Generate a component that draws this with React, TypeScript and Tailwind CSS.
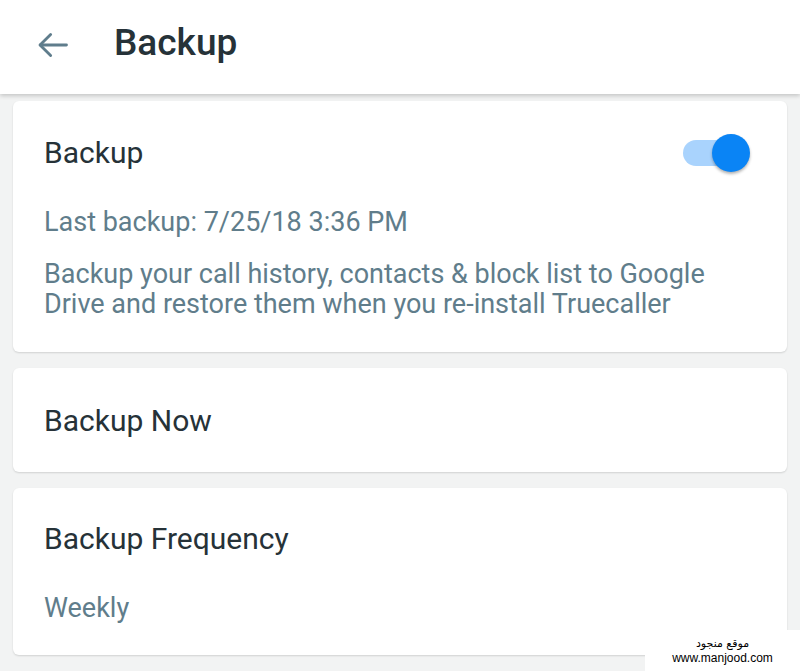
import React, { useState } from 'react';

const font = { fontFamily: 'Roboto, "Noto Sans", sans-serif' };

function Toggle({ on, onChange }: { on: boolean; onChange: () => void }) {
  return (
    <button onClick={onChange} className="relative w-[70px] h-[40px] flex items-center">
      <span className={`block w-[60px] h-[26px] rounded-full ml-[2px] ${on ? 'bg-[#a9d3fd]' : 'bg-[#c9ced1]'}`} />
      <span
        className={`absolute top-[1px] w-[38px] h-[38px] rounded-full shadow-[0_2px_3px_rgba(0,0,0,0.3)] ${
          on ? 'left-[31px] bg-[#0a84f5]' : 'left-0 bg-[#f5f5f5]'
        }`}
      />
    </button>
  );
}

export default function App() {
  const [enabled, setEnabled] = useState(true);

  return (
    <div className="relative w-[800px] h-[671px] overflow-hidden bg-[#f2f3f3]" style={font}>
      {/* Toolbar */}
      <div className="h-[94px] bg-white flex items-center shadow-[0_2px_4px_rgba(0,0,0,0.18)] relative z-10">
        <button className="ml-[34px] w-[38px] h-[38px] -mt-[4px] flex items-center justify-center text-[#5f7d8c]">
          <svg width="38" height="38" viewBox="0 0 24 24" fill="none" stroke="currentColor" strokeWidth="1.8" strokeLinecap="round" strokeLinejoin="round">
            <path d="M20.5 12H4" />
            <path d="M10.5 5.3L3.8 12l6.7 6.7" />
          </svg>
        </button>
        <h1 className="ml-[42px] text-[37px] leading-[40px] font-medium text-[#263238] -mt-[8px]">Backup</h1>
      </div>

      <div className="px-[13px] pt-[7px] flex flex-col gap-[16px]">
        {/* Backup card */}
        <div className="bg-white rounded-[6px] shadow-[0_1px_2px_rgba(0,0,0,0.14)] pl-[31px] pr-[36px] pt-[34px] pb-[33px]">
          <div className="flex items-center justify-between h-[36px]">
            <span className="text-[30px] leading-[36px] text-[#263238]">Backup</span>
            <Toggle on={enabled} onChange={() => setEnabled(!enabled)} />
          </div>
          <p className="mt-[36px] text-[27px] leading-[30px] text-[#607d8b]">Last backup: 7/25/18 3:36 PM</p>
          <p className="mt-[22px] text-[27px] leading-[30px] text-[#607d8b]">
            Backup your call history, contacts &amp; block list to Google
            <br />
            Drive and restore them when you re-install Truecaller
          </p>
        </div>

        {/* Backup now */}
        <div className="bg-white rounded-[6px] shadow-[0_1px_2px_rgba(0,0,0,0.14)] h-[104px] pl-[31px] flex items-center">
          <span className="text-[30px] leading-[36px] text-[#263238] pt-[2px]">Backup Now</span>
        </div>

        {/* Frequency */}
        <div className="bg-white rounded-[6px] shadow-[0_1px_2px_rgba(0,0,0,0.14)] pl-[31px] pt-[33px] pb-[32px]">
          <p className="text-[30px] leading-[36px] text-[#263238]">Backup Frequency</p>
          <p className="mt-[36px] text-[27px] leading-[30px] text-[#607d8b]">Weekly</p>
        </div>
      </div>

      {/* Watermark */}
      <div className="absolute right-0 bottom-0 w-[155px] h-[41px] bg-white flex flex-col items-center justify-center leading-[15px]" style={{ fontFamily: '"DejaVu Sans", sans-serif' }}>
        <span className="text-[11px] text-black" dir="rtl">موقع منجود</span>
        <span className="text-[12px] text-black" style={{ fontFamily: '"Liberation Sans", sans-serif' }}>www.manjood.com</span>
      </div>
    </div>
  );
}
